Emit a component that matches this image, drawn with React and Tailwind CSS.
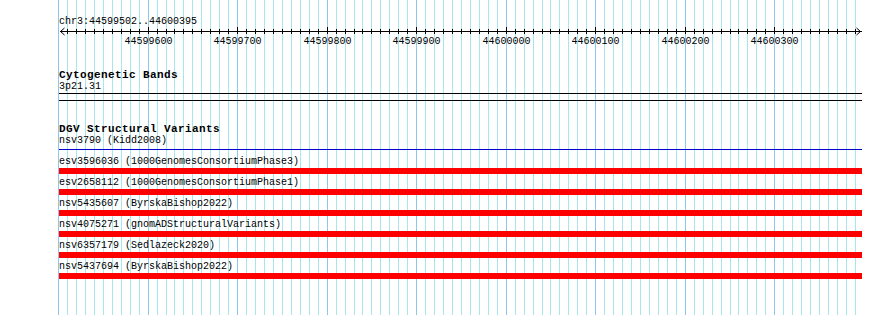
import React from "react";

const gx = (k) => Math.floor(58.6 + 8.952 * k);
const KS = Array.from({ length: 90 }, (_, i) => i);
const LABELS = [
  [10, "44599600"],
  [20, "44599700"],
  [30, "44599800"],
  [40, "44599900"],
  [50, "44600000"],
  [60, "44600100"],
  [70, "44600200"],
  [80, "44600300"],
];

const ROWS = [
  "esv3596036 (1000GenomesConsortiumPhase3)",
  "esv2658112 (1000GenomesConsortiumPhase1)",
  "nsv5435607 (ByrskaBishop2022)",
  "nsv4075271 (gnomADStructuralVariants)",
  "nsv6357179 (Sedlazeck2020)",
  "nsv5437694 (ByrskaBishop2022)",
];

function Grid() {
  return (
    <svg
      className="absolute left-0 top-0"
      width="890"
      height="315"
      shapeRendering="crispEdges"
    >
      {KS.map((k) => (
        <rect
          key={k}
          x={gx(k)}
          y={0}
          width={1}
          height={315}
          fill={k % 10 === 0 ? "#8cc8ee" : "#a6e6ec"}
        />
      ))}
    </svg>
  );
}

function Ruler() {
  return (
    <svg width="803" height="20" className="block overflow-visible">
      <rect x={1} y={4} width={802} height={1} fill="#000" shapeRendering="crispEdges" />
      {KS.slice(1).map((k) => (
        <rect
          key={k}
          x={gx(k) - 59}
          y={k % 10 === 0 ? 0 : 2}
          width={1}
          height={k % 10 === 0 ? 7 : 5}
          fill="#000"
          shapeRendering="crispEdges"
        />
      ))}
      <path d="M5.5 1 L1.5 4.5 L5.5 8" stroke="#000" fill="none" strokeWidth="1" />
      <path d="M797.5 1 L801.5 4.5 L797.5 8" stroke="#000" fill="none" strokeWidth="1" />
      {LABELS.map(([k, t]) => (
        <text
          key={k}
          x={gx(k) - 59 + 0.5}
          y={17}
          textAnchor="middle"
          fontSize="10"
          fontFamily="'Liberation Mono', monospace"
          fill="#000"
        >
          {t}
        </text>
      ))}
    </svg>
  );
}

export default function App() {
  return (
    <div className="relative w-[890px] h-[315px] overflow-hidden bg-white">
      <Grid />
      <div className="relative ml-[59px] w-[803px] font-['Liberation_Mono',monospace] text-[10px] leading-[10px] text-black">
        <div className="pt-[17px] h-[27px] whitespace-pre">chr3:44599502..44600395</div>
        <Ruler />
        <div className="mt-[22px] h-[12px] text-[11px] leading-[12px] font-bold tracking-[0.4px] whitespace-pre">
          Cytogenetic Bands
        </div>
        <div className="h-[12px] leading-[12px] whitespace-pre">3p21.31</div>
        <div className="h-px bg-black" />
        <div className="mt-[6px] h-px bg-black" />
        <div className="mt-[22px] h-[12px] text-[11px] leading-[12px] font-bold tracking-[0.4px] whitespace-pre">
          DGV Structural Variants
        </div>
        <div className="h-[12px] leading-[12px] whitespace-pre">nsv3790 (Kidd2008)</div>
        <div className="mt-[2px] h-px bg-[#0000c8]" />
        <div className="mt-[6px] flex flex-col gap-[3px]">
          {ROWS.map((r) => (
            <div key={r} className="flex flex-col">
              <div className="h-[12px] leading-[12px] whitespace-pre">{r}</div>
              <div className="h-[6px] bg-[#ff0000]" />
            </div>
          ))}
        </div>
      </div>
    </div>
  );
}
